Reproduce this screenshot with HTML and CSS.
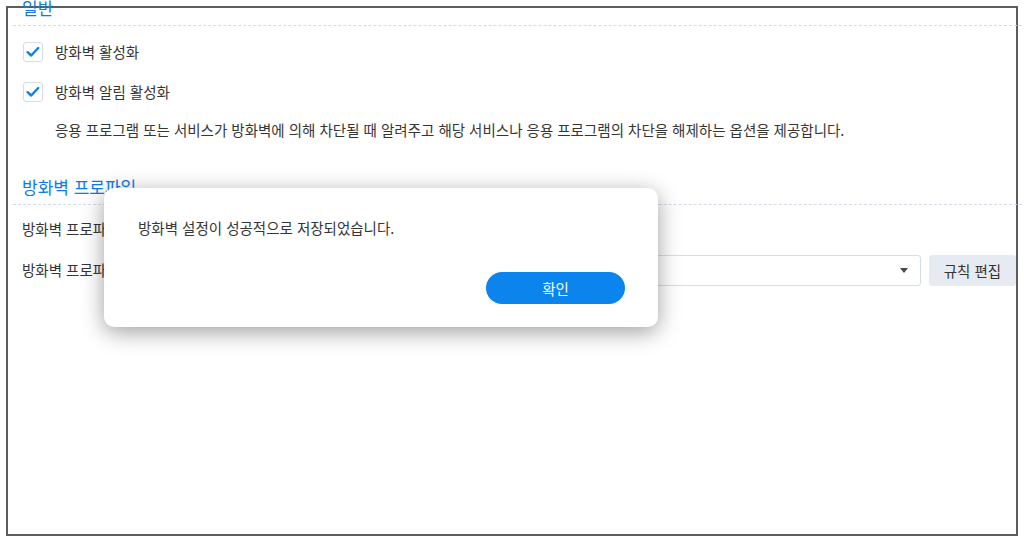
FILE: index.html
```html
<!DOCTYPE html>
<html lang="ko">
<head>
<meta charset="utf-8">
<title>방화벽</title>
<link rel="stylesheet" href="styles.css">
</head>
<body>
  <div class="frame">
    <div class="panel">
      <section class="group">
        <h2 class="group-title">일반</h2>
        <div class="check-row">
          <span class="checkbox"><svg viewBox="0 0 20 20" width="20" height="20"><path d="M4 10.2 L8 13.9 L15.8 5.6" fill="none" stroke="#1180e6" stroke-width="2.7" stroke-linecap="round" stroke-linejoin="round"/></svg></span>
          <span class="check-label">방화벽 활성화</span>
        </div>
        <div class="check-row">
          <span class="checkbox"><svg viewBox="0 0 20 20" width="20" height="20"><path d="M4 10.2 L8 13.9 L15.8 5.6" fill="none" stroke="#1180e6" stroke-width="2.7" stroke-linecap="round" stroke-linejoin="round"/></svg></span>
          <span class="check-label">방화벽 알림 활성화</span>
        </div>
        <p class="desc">응용 프로그램 또는 서비스가 방화벽에 의해 차단될 때 알려주고 해당 서비스나 응용 프로그램의 차단을 해제하는 옵션을 제공합니다.</p>
      </section>
      <section class="group group-profile">
        <h2 class="group-title">방화벽 프로파일</h2>
        <div class="field-list">
          <div class="field-row">
            <span class="field-label">방화벽 프로파일 적용 범위:</span>
          </div>
          <div class="field-row">
            <span class="field-label">방화벽 프로파일:</span>
            <div class="select"><span class="select-value">default</span><span class="caret"></span></div>
            <button class="btn-secondary">규칙 편집</button>
          </div>
        </div>
      </section>
    </div>
  </div>

  <div class="dialog">
    <p class="dialog-msg">방화벽 설정이 성공적으로 저장되었습니다.</p>
    <div class="dialog-footer">
      <button class="btn-primary">확인</button>
    </div>
  </div>
</body>
</html>
```

FILE: styles.css
```css
* { box-sizing: border-box; }

html, body {
  margin: 0;
  padding: 0;
  background: #ffffff;
}

body {
  font-family: "Noto Sans CJK KR", "Noto Sans", sans-serif;
  font-size: 14.5px;
  color: #353535;
  width: 1024px;
  height: 542px;
  position: relative;
  overflow: hidden;
}

.frame {
  margin: 6px 0 0 6px;
  width: 1012px;
  height: 530px;
  border: 2px solid #5c5c5c;
}

.panel {
  margin-top: -12px;
}

.group-title {
  margin: 0 -6px 0 5px;
  padding: 0 0 5px 9px;
  font-size: 17px;
  font-weight: 400;
  line-height: 24px;
  color: #0a7ce4;
  border-bottom: 1px dashed #d3dbe6;
}

.check-row {
  display: flex;
  align-items: center;
  gap: 12px;
  height: 40px;
  padding-left: 15px;
}

.group-title + .check-row {
  margin-top: 6px;
}

.checkbox {
  width: 20px;
  height: 20px;
  border: 1px solid #d5dde8;
  border-radius: 3px;
  background: #fff;
  display: flex;
  align-items: center;
  justify-content: center;
}

.checkbox svg {
  display: block;
  width: 18px;
  height: 18px;
}

.check-label {
  line-height: 20px;
}

.desc {
  margin: 8px 0 0 0;
  padding-left: 47px;
  line-height: 20px;
}

.group-profile {
  margin-top: 35px;
}

.field-list {
  display: flex;
  flex-direction: column;
  gap: 1px;
  padding-top: 4px;
}

.field-row {
  display: flex;
  align-items: center;
  height: 40px;
  padding-left: 14px;
}

.field-label {
  width: 208px;
  white-space: nowrap;
  line-height: 20px;
}

.select {
  flex: 1;
  height: 31px;
  border: 1px solid #d5dde8;
  border-radius: 3px;
  display: flex;
  align-items: center;
  justify-content: space-between;
  padding: 0 12px 0 10px;
}

.select-value {
  color: #353535;
}

.caret {
  width: 0;
  height: 0;
  border-left: 4px solid transparent;
  border-right: 4px solid transparent;
  border-top: 5px solid #4a4a4a;
}

.btn-secondary {
  margin-left: 8px;
  width: 87px;
  height: 31px;
  border: 0;
  border-radius: 3px;
  background: #e6ebf1;
  color: #353535;
  font-family: inherit;
  font-size: 14.5px;
  padding: 0;
}

.dialog {
  position: absolute;
  left: 104px;
  top: 188px;
  width: 554px;
  height: 139px;
  padding: 30px 33px 0 34px;
  background: #ffffff;
  border-radius: 10px;
  box-shadow: 0 5px 22px rgba(0, 0, 0, 0.38);
}

.dialog-msg {
  margin: 0;
  line-height: 20px;
}

.dialog-footer {
  display: flex;
  justify-content: flex-end;
  margin-top: 34px;
}

.btn-primary {
  width: 139px;
  height: 32px;
  border: 0;
  border-radius: 16px;
  background: #0b84ee;
  color: #ffffff;
  font-family: inherit;
  font-size: 14.5px;
  padding: 0;
}
```
